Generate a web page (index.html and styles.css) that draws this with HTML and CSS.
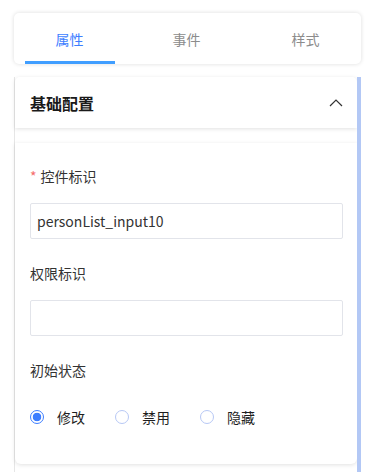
FILE: index.html
```html
<!DOCTYPE html>
<html lang="zh-CN">
<head>
  <meta charset="UTF-8"/>
  <meta name="viewport" content="width=device-width,initial-scale=1"/>
  <title>属性配置</title>
  <link rel="stylesheet" href="styles.css">
</head>
<body>
  <div class="tabs">
    <div class="tab active">属性</div>
    <div class="tab">事件</div>
    <div class="tab">样式</div>
  </div>

  <div class="panel">
    <div class="panel-body">
      <div class="card header">
        <h3>基础配置</h3>
        <svg width="14" height="8" viewBox="0 0 14 8"><polyline points="1,7 7,1 13,7" fill="none" stroke="#333" stroke-width="1.2"/></svg>
      </div>

      <div class="card form">
        <div class="field">
          <label><span class="req">*</span>控件标识</label>
          <input type="text" value="personList_input10"/>
        </div>
        <div class="field">
          <label>权限标识</label>
          <input type="text"/>
        </div>
        <div class="field">
          <label>初始状态</label>
          <div class="radios">
            <span class="radio checked"><i></i>修改</span>
            <span class="radio"><i></i>禁用</span>
            <span class="radio"><i></i>隐藏</span>
          </div>
        </div>
      </div>
    </div>
    <div class="scrollbar"></div>
  </div>
</body>
</html>
```

FILE: styles.css
```css
:root {
  --blue: #3d7eff;
  --text: #333333;
  --muted: #8c8c8c;
  --line: #e2e4ea;
}
*, *::before, *::after { margin:0; padding:0; box-sizing:border-box; }
body {
  font-family: "Noto Sans CJK SC", "Noto Sans", sans-serif;
  background: #fff;
  color: var(--text);
  overflow: hidden;
}

/* Tabs */
.tabs {
  display: flex;
  margin: 13px 7px 0 14px;
  height: 51px;
  border-radius: 5px;
  box-shadow: 0 0 4px rgba(0,0,0,0.14);
  background: #fff;
}
.tab {
  flex: 1;
  display: flex; align-items: center; justify-content: center;
  font-size: 14px; color: var(--muted);
  position: relative;
}
.tab:first-child { padding-right: 6px; }
.tab:last-child { padding-left: 8px; }
.tab.active { color: var(--blue); }
.tab.active::after {
  content: ''; position: absolute;
  left: 11px; right: 16px; bottom: 0;
  height: 3px; background: #409eff;
}

/* Panel */
.panel {
  display: flex;
  margin: 13px 7px 0 14px;
  border-left: 1px solid #e6e6e6;
  height: 395px;
}
.panel-body { flex: 1; }
.scrollbar { width: 4px; background: #b3c8f5; }

.card {
  background: #fff;
  box-shadow: 0 1px 4px rgba(0,0,0,0.12);
}
.header {
  height: 51px;
  display: flex; align-items: center; justify-content: space-between;
  padding: 0 14px 0 15px;
  border-radius: 5px 5px 0 0;
}
.header h3 { font-size: 16px; font-weight: 700; color: #1a1a1a; }

.form {
  margin-top: 15px;
  padding: 23px 14px 0 15px;
  height: 321px;
  border-radius: 0 0 6px 6px;
}
.field { display: flex; flex-direction: column; }
.field + .field { margin-top: 24px; }
.field label { font-size: 14px; line-height: 20px; color: var(--text); }
.req { color: #f56c6c; margin-right: 4px; }
.field input {
  margin-top: 17px;
  height: 36px;
  border: 1px solid var(--line);
  border-radius: 2px;
  padding: 0 6px;
  font-family: inherit;
  font-size: 14px;
  color: var(--text);
  outline: none;
}

.radios { display: flex; gap: 30px; margin-top: 27px; font-size: 14px; }
.radio { display: flex; align-items: center; gap: 13px; color: #1f1f1f; }
.radio i {
  width: 14px; height: 14px; border-radius: 50%;
  border: 1px solid #b7c8f5;
}
.radio.checked i {
  border-color: var(--blue);
  background: radial-gradient(circle, var(--blue) 0 4px, #fff 4.6px);
}
```
